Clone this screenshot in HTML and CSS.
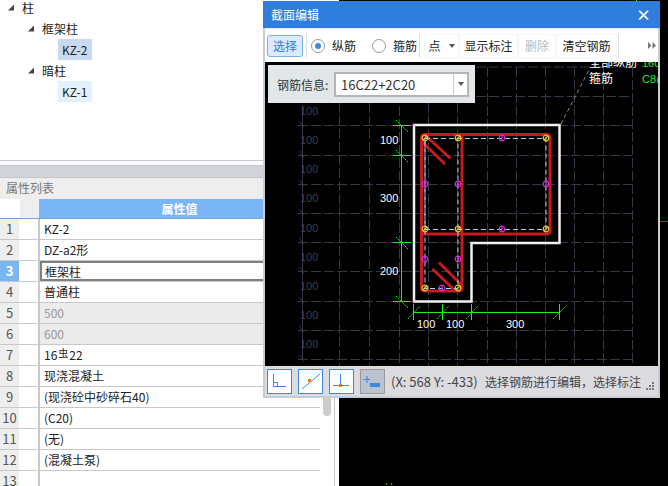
FILE: index.html
```html
<!DOCTYPE html>
<html lang="zh-CN">
<head>
    <meta charset="UTF-8">
    <meta name="viewport" content="width=device-width, initial-scale=1.0">
    <title>截面编辑</title>
    <link rel="stylesheet" href="styles.css">
</head>
<body>
    <div class="left_panel">
        <ul class="tree">
            <li class="lv1"><i class="arrow"></i>柱</li>
            <li class="lv2"><i class="arrow"></i>框架柱</li>
            <li class="lv3"><span class="leaf on">KZ-2</span></li>
            <li class="lv2"><i class="arrow"></i>暗柱</li>
            <li class="lv3"><span class="leaf hover">KZ-1</span></li>
        </ul>
        <div class="split"></div>
        <div class="panel_title">属性列表</div>
        <div class="grid_wrap">
            <div class="grid">
                <div class="row head"><div class="no"></div><div class="chk"></div><div class="val">属性值</div></div>
                <div class="row"><div class="no">1</div><div class="chk"></div><div class="val">KZ-2</div></div>
                <div class="row"><div class="no">2</div><div class="chk"></div><div class="val">DZ-a2形</div></div>
                <div class="row active"><div class="no">3</div><div class="chk"></div><div class="val">框架柱</div></div>
                <div class="row"><div class="no">4</div><div class="chk"></div><div class="val">普通柱</div></div>
                <div class="row off"><div class="no">5</div><div class="chk"></div><div class="val">500</div></div>
                <div class="row off"><div class="no">6</div><div class="chk"></div><div class="val">600</div></div>
                <div class="row"><div class="no">7</div><div class="chk"></div><div class="val">16<span class="rebar_mark">虫</span>22</div></div>
                <div class="row"><div class="no">8</div><div class="chk"></div><div class="val">现浇混凝土</div></div>
                <div class="row"><div class="no">9</div><div class="chk"></div><div class="val">(现浇砼中砂碎石40)</div></div>
                <div class="row"><div class="no">10</div><div class="chk"></div><div class="val">(C20)</div></div>
                <div class="row"><div class="no">11</div><div class="chk"></div><div class="val">(无)</div></div>
                <div class="row"><div class="no">12</div><div class="chk"></div><div class="val">(混凝土泵)</div></div>
                <div class="row"><div class="no">13</div><div class="chk"></div><div class="val"></div></div>
            </div>
            <div class="scroll_col"><div class="thumb"></div></div>
        </div>
    </div>

    <div class="far_mark"></div>
    <div class="far_top"></div>
    <svg class="far_bottom" width="8" height="3" viewBox="0 0 8 3"><path d="M1 0l1 2M7 0l-1 2"/></svg>

    <div class="dialog">
        <div class="dlg_title"><span>截面编辑</span><span class="close">×</span></div>
        <div class="toolbar">
            <button class="btn_sel">选择</button>
            <i class="sep"></i>
            <span class="radio on"></span><span class="radio_txt first">纵筋</span>
            <span class="radio"></span><span class="radio_txt">箍筋</span>
            <i class="sep tight"></i>
            <span class="tool w_dot">点<i class="caret"></i></span>
            <span class="tool w_show">显示标注</span>
            <span class="tool w_del off">删除</span>
            <span class="tool w_clear">清空钢筋</span>
            <i class="sep after"></i>
            <span class="more">
                <svg width="8" height="7" viewBox="0 0 8 7"><path d="M0 0l3.500 3.500L0 7zM4.500 0L8 3.500 4.500 7z"/></svg>
            </span>
        </div>
        <div class="canvas">
            <svg class="draw" width="393" height="304" viewBox="265 62 393 304">
                <defs>
                    <g id="bar_y"><circle r="2.8"/><path d="M-2 2L2 -2"/></g>
                    <g id="bar_m"><circle r="2.8"/><path d="M0 -3V3"/></g>
                </defs>

                <!-- grid -->
                <path class="grid_line" d="M476 67H632M476 96.500H632M298 125.500H632M298 155.500H632M298 184.500H632M298 213.500H632M298 242.500H632M298 271.500H632M298 301.500H632M298 330.500H632M298 359.500H632"/>
                <path class="grid_line" d="M339.500 103V366M369.500 103V366M399.500 67V366M428.500 103V366M457.500 103V366M487.500 67V366M516.500 67V366M545.500 67V366M574.500 67V366M603.500 67V366M632.500 67V366"/>
                <path class="axis" d="M302.500 105V360M299 121l5 6M299 151l5 6M299 180l5 6M299 209l5 6M299 238l5 6M299 267l5 6M299 297l5 6M299 326l5 6M299 355l5 6"/>
                <g class="axis_txt">
                    <text x="300" y="115">100</text><text x="300" y="144">100</text>
                    <text x="300" y="173">100</text><text x="300" y="202">100</text>
                    <text x="300" y="232">100</text><text x="300" y="261">100</text>
                    <text x="300" y="290">100</text><text x="300" y="319">100</text>
                    <text x="300" y="348">100</text>
                </g>
                <path class="leader" d="M561 124L590 68"/>

                <!-- section outline -->
                <path class="outline" d="M414 125H559.500V243H471.500V301.500H414Z"/>

                <!-- stirrups -->
                <path class="stirrup" d="M424.500 134.500H547a3 3 0 0 1 3 3V231a3 3 0 0 1-3 3H421.500M421.500 137.500a3 3 0 0 1 3-3M421.500 137.500V288a3 3 0 0 0 3 3H459a3 3 0 0 0 3-3V134.500"/>
                <path class="stirrup" d="M425 135L450.500 158.500M421.500 141.500L445 164M439 262.500L461.500 285M432.500 269L456 291.500"/>
                <path class="tie" d="M425 138.500H546V229.500H425ZM425 229.500V288.500H458V138.500M425 138.500V229.500"/>

                <g class="bar_yellow">
                    <use href="#bar_y" x="425" y="138"/><use href="#bar_y" x="458" y="138"/>
                    <use href="#bar_y" x="546" y="138"/><use href="#bar_y" x="425" y="229"/>
                    <use href="#bar_y" x="458" y="229"/><use href="#bar_y" x="546" y="229"/>
                    <use href="#bar_y" x="425" y="288"/><use href="#bar_y" x="458" y="288"/>
                </g>
                <g class="bar_magenta">
                    <use href="#bar_m" x="502" y="138"/><use href="#bar_m" x="425" y="184"/>
                    <use href="#bar_m" x="458" y="184"/><use href="#bar_m" x="546" y="184"/>
                    <use href="#bar_m" x="502" y="229"/><use href="#bar_m" x="425" y="259"/>
                    <use href="#bar_m" x="458" y="259"/><use href="#bar_m" x="442" y="288"/>
                </g>

                <!-- dimensions -->
                <path class="dim" d="M401.500 125V301M393 125.500H411M393 155.500H411M393 242.500H411M393 301.500H411M414 312.500H559.500M413.500 304V320M442.500 304V320M471.500 304V320M559.500 304V320"/>
                <path class="dim_tick" d="M396 120L408 132M396 150L408 162M396 237L408 249M396 296L408 308M408 319L420 306M437 319L449 306M466 319L478 306M553 319L566 306"/>
                <g class="dim_txt">
                    <text x="380" y="144">100</text><text x="380" y="202">300</text>
                    <text x="380" y="275">200</text><text x="417" y="328">100</text>
                    <text x="446" y="328">100</text><text x="506" y="328">300</text>
                </g>
                <g class="note_txt">
                    <text x="589" y="67">全部纵筋</text><text x="589" y="83">箍筋</text>
                </g>
                <g class="note_green">
                    <text x="642" y="67">160</text><text x="642" y="83">C8@</text>
                </g>
            </svg>

            <div class="info_box">
                <span class="info_label">钢筋信息:</span>
                <div class="combo">
                    <span class="combo_val">16C22+2C20</span>
                    <span class="combo_btn"><i class="caret"></i></span>
                </div>
            </div>
        </div>
        <div class="statusbar">
            <span class="snap">
                <svg width="23" height="23" viewBox="0 0 23 23"><path class="ic" d="M5.500 4V16.500H18M5.500 12.500H9.500V16.500"/></svg>
            </span>
            <span class="snap">
                <svg width="23" height="23" viewBox="0 0 23 23"><path class="ic" d="M3 19L21 4"/><rect class="ic_dot" x="9" y="9" width="3" height="3"/></svg>
            </span>
            <span class="snap">
                <svg width="23" height="23" viewBox="0 0 23 23"><path class="ic" d="M3 15.500H19M10.500 4V15.500"/><rect class="ic_dot" x="9" y="14" width="3" height="3"/></svg>
            </span>
            <span class="snap on">
                <svg width="23" height="23" viewBox="0 0 23 23"><path class="ic" d="M2.500 9.500H9.500M6 6V13"/><rect class="ic_fill" x="9" y="13" width="10" height="4"/></svg>
            </span>
            <span class="coord">(X: 568 Y: -433)</span>
            <span class="hint">选择钢筋进行编辑，选择标注</span>
            <svg class="grip" width="8" height="8" viewBox="0 0 8 8"><path d="M6 0h2v2H6zM3 3h2v2H3zM6 3h2v2H6zM0 6h2v2H0zM3 6h2v2H3zM6 6h2v2H6z"/></svg>
        </div>
    </div>
</body>
</html>
```

FILE: styles.css
```css
*{margin:0;padding:0;box-sizing:border-box;}
li{list-style:none;}
body{position:relative;width:668px;height:486px;overflow:hidden;background-color:#000;font-family:"Noto Sans CJK SC","Noto Sans",sans-serif;font-size:12px;color:#222;}
/* left panel */
.left_panel{width:339px;height:486px;overflow:hidden;background-color:#fff;}
.tree{height:164px;margin-top:-3px;border-bottom:1px solid #c8c8cc;}
.tree li{display:flex;align-items:center;height:21px;}
.lv1{padding-left:8px;}
.lv2{padding-left:28px;}
.lv3{padding-left:58px;}
.arrow{width:6px;height:6px;margin-right:8px;background-color:#444;clip-path:polygon(100% 0,100% 100%,0 100%);}
.leaf{display:block;width:34px;height:21px;padding-left:4px;line-height:21px;}
.leaf.on{background-color:#c9daf0;}
.leaf.hover{background-color:#e3f1fe;}
.split{height:12px;margin-top:4px;border-top:1px solid #c4c5ca;background-color:#d3d4d9;}
.panel_title{height:22px;padding-left:6px;border-top:1px solid #c4c5ca;line-height:20px;color:#777;background-color:#eee;}
.grid_wrap{display:flex;}
.grid{width:320px;}
.row{display:flex;height:21px;border-bottom:1px solid #c8c8cc;}
.no{width:20px;border-right:1px solid #fff;line-height:20px;text-align:center;color:#555;background-color:#eee;font-size:13px;}
.chk{width:20px;border-right:2px solid #c8c8cc;background-color:#fff;}
.val{flex:1;padding-left:4px;line-height:20px;white-space:nowrap;}
.row.head{height:20px;border-bottom:1px solid #6ea6e4;}
.row.head .no{background-color:#fff;}
.row.head .chk{border-right:0;width:19px;background-color:#eee;}
.row.head .val{padding:0;text-align:center;font-weight:bold;color:#fff;background-color:#7ab6f5;}
.row.active .no{color:#fff;font-weight:bold;background-color:#7ab6f5;}
.row.active .val{border:2px solid #808080;padding-left:3px;line-height:17px;}
.row.off .val{color:#999;background-color:#ebebeb;}
.rebar_mark{display:inline-block;font-size:10px;line-height:10px;vertical-align:3px;margin:0 1px;}
.scroll_col{width:15px;border-right:1px solid #c8c8cc;padding-left:3px;}
.thumb{width:8px;height:217px;border-radius:0 0 4px 4px;background-color:#ccc;}
/* black background bits */
.far_mark{position:absolute;top:221px;left:660px;width:8px;height:1px;background-color:#0a7d12;}
.far_top{position:absolute;top:0;left:636px;width:1px;height:1px;background-color:#19f01e;}
.far_bottom{position:absolute;top:483px;left:385px;}
.far_bottom path{fill:none;stroke:#19f01e;stroke-width:1;}
/* dialog */
.dialog{position:absolute;top:1px;left:263px;display:flex;flex-direction:column;width:397px;height:397px;padding:0 2px 2px;background-color:#c8ccd4;}
.dlg_title{display:flex;justify-content:space-between;align-items:center;flex:none;height:27px;margin:0 -2px;padding:0 9px 0 8px;color:#fff;background-color:#2f7ede;}
.close{font-size:15px;font-weight:bold;line-height:15px;}
.toolbar{display:flex;align-items:center;flex:none;height:34px;padding:0 2px;border-top:1px solid #e6e6e6;background-color:#fff;}
.btn_sel{flex:none;width:36px;height:22px;border:1px solid #7ab0ea;border-radius:3px;color:#2f7ede;background-color:#dceafc;font:12px "Noto Sans CJK SC",sans-serif;}
.sep{flex:none;width:1px;height:24px;margin:0 3px;background-color:#ddd;}
.sep.tight{margin-left:2px;}
.sep.after{margin-left:1px;}
.radio{position:relative;flex:none;width:14px;height:14px;margin:0 7px 0 1px;border:1px solid #999;border-radius:50%;}
.radio.on::after{content:"";position:absolute;top:3px;left:3px;width:6px;height:6px;border-radius:50%;background-color:#3a8ae0;}
.radio_txt{flex:none;width:24px;}
.radio_txt.first{margin-right:15px;}
.tool{display:flex;justify-content:center;align-items:center;flex:none;height:24px;border:1px solid #f6f6f6;}
.w_dot{width:35px;margin-left:1px;}
.w_show{width:59px;}
.w_del{width:38px;color:#bbb;}
.w_clear{width:61px;}
.caret{display:inline-block;width:0;height:0;margin-left:8px;border:3px solid transparent;border-top:4px solid #555;border-bottom:0;}
.more{margin-left:26px;line-height:0;}
.more svg{fill:#777;}
.canvas{position:relative;flex:1;overflow:hidden;background-color:#000;}
.draw{display:block;}
.grid_line{fill:none;stroke:#333947;stroke-width:1;stroke-dasharray:10 3;}
.axis{fill:none;stroke:#333947;stroke-width:1;}
.axis_txt text{font:11px "Liberation Sans",sans-serif;fill:#3a404e;}
.leader{fill:none;stroke:#888;stroke-width:1;stroke-dasharray:4 3;}
.outline{fill:none;stroke:#f0f0f0;stroke-width:2.5;}
.stirrup{fill:none;stroke:#c8191f;stroke-width:3;}
.tie{fill:none;stroke:#a8d4f4;stroke-width:1;stroke-dasharray:5 3;}
.bar_yellow{fill:none;stroke:#e8c32c;stroke-width:1.2;}
.bar_magenta{fill:none;stroke:#d22ed2;stroke-width:1.2;}
.dim{fill:none;stroke:#19f01e;stroke-width:1;}
.dim_tick{fill:none;stroke:#19f01e;stroke-width:1;stroke-dasharray:2 1;}
.dim_txt text{font:11px "Liberation Sans",sans-serif;fill:#fff;}
.note_txt text{font:12px "Noto Sans CJK SC",sans-serif;fill:#fff;}
.note_green text{font:11px "Liberation Sans",sans-serif;fill:#19f01e;}
.info_box{position:absolute;top:3px;left:3px;display:flex;align-items:center;width:207px;height:38px;padding-left:9px;color:#333;background-color:#e1e7e8;}
.info_label{width:57px;}
.combo{display:flex;align-items:center;width:135px;height:25px;border:2px solid #b5b5b5;background-color:#fff;}
.combo_val{flex:1;padding-left:5px;font-size:13px;}
.combo_btn{display:flex;justify-content:center;align-items:center;width:14px;height:100%;border-left:1px solid #c8c8c8;}
.combo_btn .caret{margin:0;}
/* status */
.statusbar{display:flex;align-items:center;flex:none;height:30px;padding:0 4px 0 2px;color:#444;background-color:#dcdce0;}
.snap{flex:none;width:25px;height:25px;margin-right:6px;border:1px solid #3a8ae0;background-color:#fff;}
.snap svg{display:block;}
.snap.on{border-color:#999;background-color:#bcc3cf;}
.ic{fill:none;stroke:#3a8ae0;stroke-width:1;}
.ic_dot{fill:#e87a20;}
.ic_fill{fill:#3a8ae0;}
.coord{width:94px;font-size:13px;white-space:nowrap;}
.hint{flex:1;white-space:nowrap;}
.grip{flex:none;margin-top:10px;fill:#777;}
```
